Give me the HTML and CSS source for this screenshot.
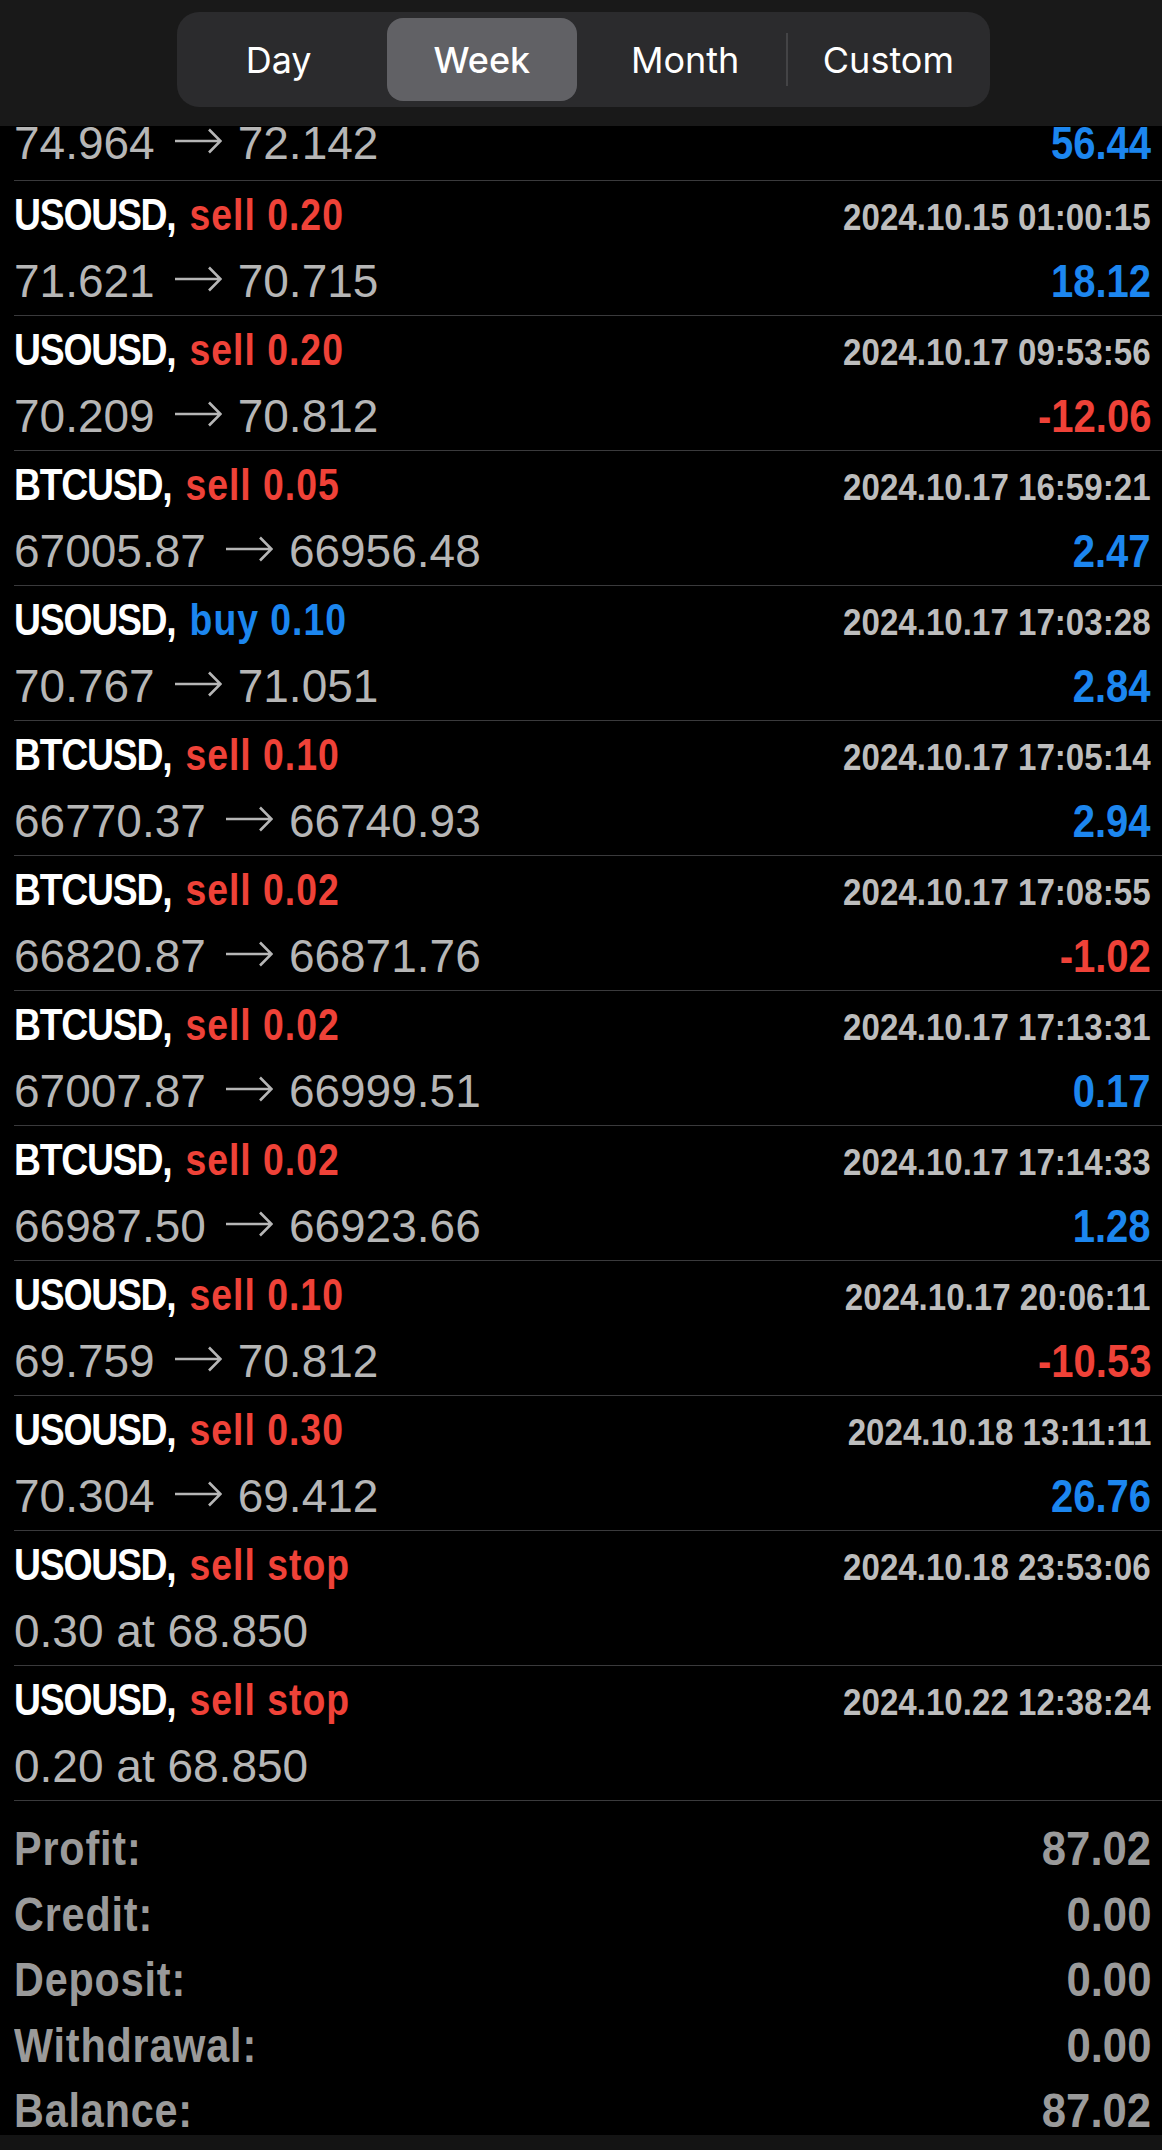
FILE: index.html
```html
<!DOCTYPE html>
<html lang="en">
<head>
  <meta charset="UTF-8">
  <meta name="viewport" content="width=device-width, initial-scale=1.0">
  <title>History</title>
  <link rel="stylesheet" href="styles.css">
</head>
<body>
  <div class="top-bar">
    <div class="segments">
      <div class="segment">Day</div>
      <div class="segment active">Week</div>
      <div class="segment">Month</div>
      <div class="segment divided">Custom</div>
    </div>
  </div>

  <div class="deals">
    <div class="deal">
      <div class="line head"><span class="symbol">&nbsp;</span></div>
      <div class="line"><span class="prices">74.964<svg class="arrow" viewBox="0 0 47 26"><path d="M0 13H45M34 1.5L45.5 13L34 24.5"/></svg>72.142</span><span class="profit plus">56.44</span></div>
    </div>
    <div class="deal">
      <div class="line head"><span class="symbol">USOUSD, <span class="sell">sell 0.20</span></span><span class="time">2024.10.15 01:00:15</span></div>
      <div class="line"><span class="prices">71.621<svg class="arrow" viewBox="0 0 47 26"><path d="M0 13H45M34 1.5L45.5 13L34 24.5"/></svg>70.715</span><span class="profit plus">18.12</span></div>
    </div>
    <div class="deal">
      <div class="line head"><span class="symbol">USOUSD, <span class="sell">sell 0.20</span></span><span class="time">2024.10.17 09:53:56</span></div>
      <div class="line"><span class="prices">70.209<svg class="arrow" viewBox="0 0 47 26"><path d="M0 13H45M34 1.5L45.5 13L34 24.5"/></svg>70.812</span><span class="profit minus">-12.06</span></div>
    </div>
    <div class="deal">
      <div class="line head"><span class="symbol">BTCUSD, <span class="sell">sell 0.05</span></span><span class="time">2024.10.17 16:59:21</span></div>
      <div class="line"><span class="prices">67005.87<svg class="arrow" viewBox="0 0 47 26"><path d="M0 13H45M34 1.5L45.5 13L34 24.5"/></svg>66956.48</span><span class="profit plus">2.47</span></div>
    </div>
    <div class="deal">
      <div class="line head"><span class="symbol">USOUSD, <span class="buy">buy 0.10</span></span><span class="time">2024.10.17 17:03:28</span></div>
      <div class="line"><span class="prices">70.767<svg class="arrow" viewBox="0 0 47 26"><path d="M0 13H45M34 1.5L45.5 13L34 24.5"/></svg>71.051</span><span class="profit plus">2.84</span></div>
    </div>
    <div class="deal">
      <div class="line head"><span class="symbol">BTCUSD, <span class="sell">sell 0.10</span></span><span class="time">2024.10.17 17:05:14</span></div>
      <div class="line"><span class="prices">66770.37<svg class="arrow" viewBox="0 0 47 26"><path d="M0 13H45M34 1.5L45.5 13L34 24.5"/></svg>66740.93</span><span class="profit plus">2.94</span></div>
    </div>
    <div class="deal">
      <div class="line head"><span class="symbol">BTCUSD, <span class="sell">sell 0.02</span></span><span class="time">2024.10.17 17:08:55</span></div>
      <div class="line"><span class="prices">66820.87<svg class="arrow" viewBox="0 0 47 26"><path d="M0 13H45M34 1.5L45.5 13L34 24.5"/></svg>66871.76</span><span class="profit minus">-1.02</span></div>
    </div>
    <div class="deal">
      <div class="line head"><span class="symbol">BTCUSD, <span class="sell">sell 0.02</span></span><span class="time">2024.10.17 17:13:31</span></div>
      <div class="line"><span class="prices">67007.87<svg class="arrow" viewBox="0 0 47 26"><path d="M0 13H45M34 1.5L45.5 13L34 24.5"/></svg>66999.51</span><span class="profit plus">0.17</span></div>
    </div>
    <div class="deal">
      <div class="line head"><span class="symbol">BTCUSD, <span class="sell">sell 0.02</span></span><span class="time">2024.10.17 17:14:33</span></div>
      <div class="line"><span class="prices">66987.50<svg class="arrow" viewBox="0 0 47 26"><path d="M0 13H45M34 1.5L45.5 13L34 24.5"/></svg>66923.66</span><span class="profit plus">1.28</span></div>
    </div>
    <div class="deal">
      <div class="line head"><span class="symbol">USOUSD, <span class="sell">sell 0.10</span></span><span class="time">2024.10.17 20:06:11</span></div>
      <div class="line"><span class="prices">69.759<svg class="arrow" viewBox="0 0 47 26"><path d="M0 13H45M34 1.5L45.5 13L34 24.5"/></svg>70.812</span><span class="profit minus">-10.53</span></div>
    </div>
    <div class="deal">
      <div class="line head"><span class="symbol">USOUSD, <span class="sell">sell 0.30</span></span><span class="time">2024.10.18 13:11:11</span></div>
      <div class="line"><span class="prices">70.304<svg class="arrow" viewBox="0 0 47 26"><path d="M0 13H45M34 1.5L45.5 13L34 24.5"/></svg>69.412</span><span class="profit plus">26.76</span></div>
    </div>
    <div class="deal">
      <div class="line head"><span class="symbol">USOUSD, <span class="sell">sell stop</span></span><span class="time">2024.10.18 23:53:06</span></div>
      <div class="line"><span class="prices">0.30 at 68.850</span></div>
    </div>
    <div class="deal">
      <div class="line head"><span class="symbol">USOUSD, <span class="sell">sell stop</span></span><span class="time">2024.10.22 12:38:24</span></div>
      <div class="line"><span class="prices">0.20 at 68.850</span></div>
    </div>
  </div>

  <div class="summary">
    <div class="sum-row"><span class="label">Profit:</span><span class="value">87.02</span></div>
    <div class="sum-row"><span class="label">Credit:</span><span class="value">0.00</span></div>
    <div class="sum-row"><span class="label">Deposit:</span><span class="value">0.00</span></div>
    <div class="sum-row"><span class="label">Withdrawal:</span><span class="value">0.00</span></div>
    <div class="sum-row"><span class="label">Balance:</span><span class="value">87.02</span></div>
  </div>

  <div class="tab-bar"></div>
</body>
</html>
```

FILE: styles.css
```css
* {
  box-sizing: border-box;
  margin: 0;
  padding: 0;
}

body {
  background-color: #000;
  color: #fff;
  font-family: "Liberation Sans", Arial, sans-serif;
  overflow: hidden;
}

/* top bar with the period switch, lies over the list */
.top-bar {
  position: fixed;
  top: 0;
  left: 0;
  right: 0;
  height: 126px;
  background-color: #191919;
  display: flex;
  justify-content: center;
  padding-top: 12px;
  z-index: 10;
}

.segments {
  display: flex;
  width: 813px;
  height: 95px;
  margin-left: 5px;
  padding: 6px 0;
  background-color: #2b2b2d;
  border-radius: 22px;
}

.segment {
  flex: 1;
  display: flex;
  justify-content: center;
  align-items: center;
  margin: 0 7px;
  font-family: Inter, "Liberation Sans", sans-serif;
  font-size: 36px;
  color: #fff;
  border-radius: 16px;
  position: relative;
}

.segment.active {
  background-color: #616165;
  font-weight: 500;
}

.segment.divided::before {
  content: "";
  position: absolute;
  left: -8px;
  top: 15px;
  bottom: 15px;
  width: 2px;
  background-color: #444446;
}

/* deals list */
.deals {
  padding-top: 46px;
}

.deal {
  height: 135px;
  margin-left: 14px;
  padding: 6px 11px 0 0;
  border-bottom: 1px solid #3a3a3c;
}

.line {
  display: flex;
  justify-content: space-between;
  align-items: baseline;
  line-height: 70px;
  white-space: nowrap;
}

.line.head {
  line-height: 56px;
}

/* the app uses a narrow bold face, squeeze the bold text */
.symbol {
  font-weight: bold;
  font-size: 45px;
  letter-spacing: -1.5px;
  color: #fff;
  transform: scaleX(0.83);
  transform-origin: left;
}

.sell,
.buy {
  margin-left: 6px;
  letter-spacing: 1.2px;
}

.sell { color: #ef4238; }
.buy { color: #1c86ef; }

.time {
  font-weight: bold;
  font-size: 37px;
  color: #bdbdbd;
  transform: scaleX(0.895);
  transform-origin: right;
}

.prices {
  font-size: 46px;
  color: #b6b6b6;
}

.arrow {
  width: 47px;
  height: 26px;
  margin: 0 16px 0 20px;
  vertical-align: 5px;
  fill: none;
  stroke: #b6b6b6;
  stroke-width: 2.6;
}

.profit {
  font-weight: bold;
  font-size: 46px;
  transform: scaleX(0.87);
  transform-origin: right;
}

.profit.plus { color: #1c86ef; }
.profit.minus { color: #ef4238; }

/* totals */
.summary {
  padding: 15px 11px 0 14px;
}

.sum-row {
  display: flex;
  justify-content: space-between;
  line-height: 65.5px;
  font-weight: bold;
  font-size: 48px;
  color: #9a9a9a;
}

.label {
  letter-spacing: 1px;
  transform: scaleX(0.86);
  transform-origin: left;
}

.value {
  transform: scaleX(0.91);
  transform-origin: right;
}

.tab-bar {
  position: fixed;
  left: 0;
  right: 0;
  bottom: 0;
  height: 15px;
  background-color: #141414;
}
```
